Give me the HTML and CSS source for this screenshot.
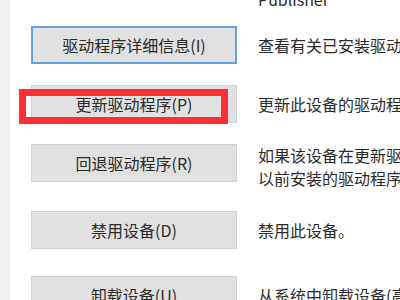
FILE: index.html
```html
<!DOCTYPE html>
<html lang="zh-CN">
<head>
  <meta charset="UTF-8">
  <title>驱动程序</title>
  <link rel="stylesheet" href="styles.css">
</head>
<body>
  <div class="strip"></div>
  <div class="panel">
    <div class="signer">Publisher</div>
    <div class="rows">
      <div class="row">
        <button class="btn focus">驱动程序详细信息(I)</button>
        <div class="desc">查看有关已安装驱动程序的详细信息。</div>
      </div>
      <div class="row">
        <button class="btn">更新驱动程序(P)<span class="mark"></span></button>
        <div class="desc">更新此设备的驱动程序。</div>
      </div>
      <div class="row">
        <button class="btn">回退驱动程序(R)</button>
        <div class="desc multi">如果该设备在更新驱动程序时失败，则回退到以前安装的驱动程序。</div>
      </div>
      <div class="row">
        <button class="btn">禁用设备(D)</button>
        <div class="desc">禁用此设备。</div>
      </div>
      <div class="row last">
        <button class="btn">卸载设备(U)</button>
        <div class="desc">从系统中卸载设备(高级)。</div>
      </div>
    </div>
  </div>
</body>
</html>
```

FILE: styles.css
```css
html, body {
  margin: 0;
  height: 100%;
  overflow: hidden;
}
body {
  display: flex;
  background-color: #fff;
  font-family: "Noto Sans CJK SC", "Noto Sans", sans-serif;
  font-size: 16px;
  color: #2b2b2b;
}
.strip {
  width: 10px;
  flex: none;
  background-color: #f0f0f0;
}
.panel {
  padding-left: 21px;
  margin-top: -12px;
}
.signer {
  margin-left: 227px;
  line-height: 23px;
  margin-bottom: 15px;
}
.rows {
  display: flex;
  flex-direction: column;
  gap: 21px;
}
.row {
  display: flex;
  align-items: flex-start;
  gap: 21px;
}
.row.last {
  margin-top: 6px;
}
.btn {
  position: relative;
  flex: none;
  box-sizing: border-box;
  width: 206px;
  height: 38px;
  padding: 0;
  font-family: inherit;
  font-size: 16px;
  color: #2b2b2b;
  background-color: #e1e1e1;
  border: 1px solid #d2d2d2;
}
.btn.focus {
  border: 2px solid #63a3dd;
}
.desc {
  width: 330px;
  flex: none;
  line-height: 23px;
  margin-top: 8px;
}
.desc.multi {
  margin-top: 0;
}
.mark {
  position: absolute;
  left: -13px;
  top: 3px;
  width: 209px;
  height: 35px;
  box-sizing: border-box;
  border: 7px solid #fb3036;
}
```
